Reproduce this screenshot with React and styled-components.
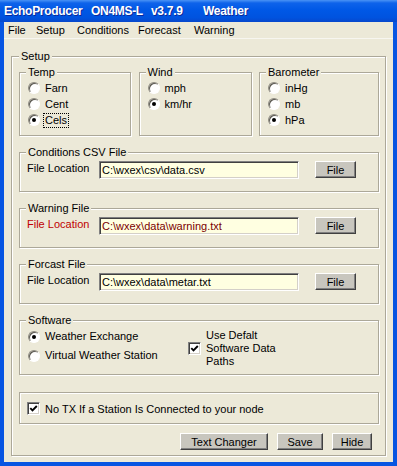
import React from "react";
import styled, { createGlobalStyle } from "styled-components";

const FACE = "#ECE9D8";
const ETCH = "#ACA899";
const BLUE = "#0755E2";
const UI_FONT = `"Liberation Sans", Arial, sans-serif`;

const GlobalStyle = createGlobalStyle`
  html, body {
    margin: 0;
    padding: 0;
    background: ${FACE};
  }
  body {
    font-family: ${UI_FONT};
    font-size: 11px;
    color: #000;
  }
  * {
    box-sizing: border-box;
  }
`;

const Window = styled.div`
  width: 397px;
  height: 466px;
  display: flex;
  flex-direction: column;
  overflow: hidden;
`;

const TitleBar = styled.div`
  flex: none;
  height: 22px;
  display: grid;
  grid-template-columns: 87px 60px 52px auto;
  align-items: center;
  padding-left: 4px;
  background: linear-gradient(
    #4A93F5 0,
    #0E63EA 3px,
    #0058E6 45%,
    #0053DF 80%,
    #0748CC 100%
  );
  color: #fff;
  font-weight: bold;
  font-size: 12px;
  letter-spacing: -0.3px;
  text-shadow: 1px 1px 0 #0A2A9A;
`;

const Frame = styled.div`
  flex: 1;
  display: flex;
  flex-direction: column;
  background: ${FACE};
  border-style: solid;
  border-width: 0 4px 4px;
  border-color: ${BLUE};
`;

const MenuBar = styled.div`
  height: 17px;
  display: grid;
  grid-template-columns: 28px 41px 61px 56px auto;
  align-items: center;
  padding-left: 4px;
  border-bottom: 1px solid #F7F6F0;
  line-height: 16px;
`;

const Group = styled.div`
  border: 1px solid ${ETCH};
  box-shadow: inset 1px 1px 0 #fff, 1px 1px 0 #fff;
  padding: ${(p) => p.$pad || "0 7px 7px 8px"};
  margin: ${(p) => p.$margin || "0"};
`;

const Caption = styled.div`
  width: fit-content;
  margin: -7px 0 ${(p) => p.$mb || 0}px ${(p) => p.$ml || 0}px;
  padding: 0 2px;
  line-height: 13px;
  background: ${FACE};
`;

const Stack = styled.div`
  display: flex;
  flex-direction: column;
  gap: 16px;
`;

const UnitsRow = styled.div`
  display: grid;
  grid-template-columns: 112px 113px 120px;
  justify-content: space-between;
`;

const RadioList = styled.div`
  margin-top: 1px;
  display: flex;
  flex-direction: column;
`;

const OptionRow = styled.div`
  display: flex;
  align-items: center;
  gap: 5px;
  height: ${(p) => p.$h || 16}px;
`;

const RadioCircle = styled.span`
  flex: none;
  width: 12px;
  height: 12px;
  border-radius: 50%;
  background: #fff;
  border: 1px solid;
  border-color: #8E8B80 #fff #fff #8E8B80;
  box-shadow: inset 1px 1px 0 #5A5850;
  display: flex;
  align-items: center;
  justify-content: center;
`;

const RadioDot = styled.span`
  width: 4px;
  height: 4px;
  border-radius: 50%;
  background: #000;
`;

const OptionText = styled.span`
  line-height: 13px;
  padding: 0 1px;
  margin-left: -1px;
  outline: ${(p) => (p.$focus ? "1px dotted #000" : "none")};
`;

const CheckBox = styled.span`
  flex: none;
  width: 13px;
  height: 13px;
  background: #fff;
  border: 1px solid;
  border-color: #808080 #fff #fff #808080;
  box-shadow: inset 1px 1px 0 #404040, inset -1px -1px 0 #D4D0C8;
  display: flex;
  align-items: center;
  justify-content: center;
`;

const FileRow = styled.div`
  display: grid;
  grid-template-columns: 72px 200px auto;
  align-items: start;
  margin-top: 2px;
  height: 18px;
`;

const FieldLabel = styled.span`
  line-height: 15px;
  color: ${(p) => p.$color || "#000"};
`;

const PathInput = styled.input`
  width: 200px;
  height: 18px;
  margin: 0;
  padding: 0 2px;
  font-family: ${UI_FONT};
  font-size: 11px;
  color: ${(p) => p.$color || "#000"};
  background: #FFFFE1;
  border: 1px solid;
  border-color: #808080 #fff #fff #808080;
  box-shadow: inset 1px 1px 0 #404040, inset -1px -1px 0 #D4D0C8;
  outline: none;
`;

const Button = styled.button`
  width: ${(p) => p.$w}px;
  height: 17px;
  margin: 0 0 0 ${(p) => p.$ml || 0}px;
  padding: 0;
  font-family: ${UI_FONT};
  font-size: 11px;
  color: #000;
  background: #C8C6BE;
  border: 1px solid;
  border-color: #fff #404040 #404040 #fff;
  box-shadow: inset -1px -1px 0 #808080;
`;

const SoftwareGrid = styled.div`
  display: grid;
  grid-template-columns: 160px auto;
`;

const DefaultPaths = styled.div`
  display: flex;
  align-items: center;
  gap: 5px;
  margin-top: 2px;
`;

const PathsText = styled.div`
  line-height: 13px;
`;

const ButtonRow = styled.div`
  display: flex;
  justify-content: flex-end;
  gap: 9px;
  padding-right: 7px;
  margin-top: -7px;
`;

const Check = () => (
  <svg width="9" height="9" viewBox="0 0 9 9">
    <path d="M1.3 4.2 L3.5 6.4 L7.8 2" stroke="#000" strokeWidth="1.9" fill="none" />
  </svg>
);

const Radio = ({ label, checked, focus, h }) => (
  <OptionRow $h={h}>
    <RadioCircle>{checked && <RadioDot />}</RadioCircle>
    <OptionText $focus={focus}>{label}</OptionText>
  </OptionRow>
);

const UnitGroup = ({ title, options, selected }) => (
  <Group>
    <Caption $ml={-2}>{title}</Caption>
    <RadioList>
      {options.map((o) => (
        <Radio key={o} label={o} checked={o === selected} focus={o === "Cels"} />
      ))}
    </RadioList>
  </Group>
);

const FileGroup = ({ title, path, labelColor, textColor }) => (
  <Group $pad="0 7px 12px 7px">
    <Caption $ml={-1}>{title}</Caption>
    <FileRow>
      <FieldLabel $color={labelColor}>File Location</FieldLabel>
      <PathInput readOnly defaultValue={path} $color={textColor} />
      <Button $w={41} $ml={16}>File</Button>
    </FileRow>
  </Group>
);

export default function App() {
  return (
    <>
      <GlobalStyle />
      <Window>
        <TitleBar>
          <span>EchoProducer</span>
          <span>ON4MS-L</span>
          <span>v3.7.9</span>
          <span>Weather</span>
        </TitleBar>
        <Frame>
          <MenuBar>
            <span>File</span>
            <span>Setup</span>
            <span>Conditions</span>
            <span>Forecast</span>
            <span>Warning</span>
          </MenuBar>

          <Group $pad="0 6px 5px 7px" $margin="17px 7px 0">
            <Caption $mb={9}>Setup</Caption>
            <Stack>
              <UnitsRow>
                <UnitGroup title="Temp" options={["Farn", "Cent", "Cels"]} selected="Cels" />
                <UnitGroup title="Wind" options={["mph", "km/hr"]} selected="km/hr" />
                <UnitGroup title="Barometer" options={["inHg", "mb", "hPa"]} selected="hPa" />
              </UnitsRow>

              <FileGroup title="Conditions CSV File" path="C:\wxex\csv\data.csv" />
              <FileGroup
                title="Warning File"
                path="C:\wxex\data\warning.txt"
                labelColor="#C00000"
                textColor="#7A0000"
              />
              <FileGroup title="Forcast File" path="C:\wxex\data\metar.txt" />

              <Group $pad="0 7px 6px 8px">
                <Caption $ml={-2}>Software</Caption>
                <SoftwareGrid>
                  <div>
                    <Radio label="Weather Exchange" checked h={19} />
                    <Radio label="Virtual Weather Station" h={19} />
                  </div>
                  <DefaultPaths>
                    <CheckBox>
                      <Check />
                    </CheckBox>
                    <PathsText>
                      Use Defalt
                      <br />
                      Software Data
                      <br />
                      Paths
                    </PathsText>
                  </DefaultPaths>
                </SoftwareGrid>
              </Group>

              <Group $pad="9px 7px 8px 7px" $margin="1px 0 0">
                <OptionRow $h={13}>
                  <CheckBox>
                    <Check />
                  </CheckBox>
                  <span>No TX If a Station Is Connected to your node</span>
                </OptionRow>
              </Group>

              <ButtonRow>
                <Button $w={88}>Text Changer</Button>
                <Button $w={46}>Save</Button>
                <Button $w={40}>Hide</Button>
              </ButtonRow>
            </Stack>
          </Group>
        </Frame>
      </Window>
    </>
  );
}
